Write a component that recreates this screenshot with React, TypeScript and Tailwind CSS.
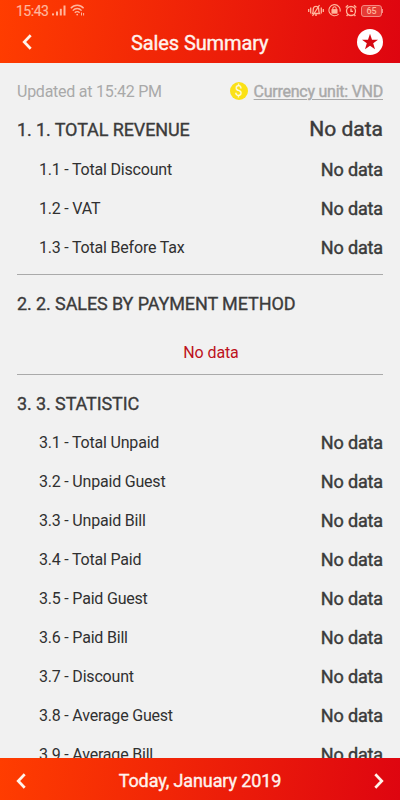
const revenueRows = ["1.1 - Total Discount", "1.2 - VAT", "1.3 - Total Before Tax"];

const statisticRows = [
  "3.1 - Total Unpaid",
  "3.2 - Unpaid Guest",
  "3.3 - Unpaid Bill",
  "3.4 - Total Paid",
  "3.5 - Paid Guest",
  "3.6 - Paid Bill",
  "3.7 - Discount",
  "3.8 - Average Guest",
  "3.9 - Average Bill",
];

function Chevron({ flip = false }: { flip?: boolean }) {
  return (
    <svg width="10" height="16" viewBox="0 0 10 16" fill="none" className={flip ? "rotate-180" : ""}>
      <path d="M8.7 1.2 L2.2 8 L8.7 14.8" stroke="#fff3ea" strokeWidth="2.7" />
    </svg>
  );
}

function StatusBar() {
  return (
    <div className="flex h-[21px] items-center pl-4 pr-[17px] text-[#ffb59c]">
      <span className="text-[14px] leading-5 tracking-[-0.5px] [-webkit-text-stroke:0.2px_#ffb59c]">15:43</span>
      <svg width="14" height="11" viewBox="0 0 14 11" fill="currentColor" className="ml-1">
        <rect x="0" y="8.4" width="2" height="2" />
        <rect x="4" y="6.5" width="2" height="4" />
        <rect x="7.8" y="3.8" width="2" height="6.7" />
        <rect x="11.5" y="0.5" width="2" height="10" />
      </svg>
      <svg width="16" height="13" viewBox="0 0 16 13" fill="none" stroke="currentColor" strokeWidth="1.4" className="ml-1">
        <path d="M0.8 4.3 C4.4 0.2 10 0.2 13.6 4.3" />
        <path d="M2.8 6.6 C5.3 3.8 9.1 3.8 11.6 6.6" />
        <path d="M4.8 8.8 C6.3 7.2 8.1 7.2 9.6 8.8" />
        <circle cx="7.2" cy="10.6" r="0.9" fill="currentColor" stroke="none" />
        <path d="M11.5 8.5 V11.5 M13.6 9 V11.5" strokeWidth="1" />
      </svg>
      <div className="ml-auto flex items-center gap-1">
        <svg width="16" height="13" viewBox="0 0 16 13" fill="none" stroke="currentColor" strokeWidth="1.3">
          <path d="M0.7 5 V8 M2.7 3.5 V9.5 M13.3 3.5 V9.5 M15.3 5 V8" />
          <path d="M4.5 9.5 C5.5 8 5 5.5 5.5 4 C6.2 1.8 9.8 1.8 10.5 4 C11 5.5 10.5 8 11.5 9.5 Z M7 11.2 H9" />
          <path d="M11.5 1 L4.5 12" />
        </svg>
        <svg width="13" height="13" viewBox="0 0 13 13" fill="none" stroke="currentColor" strokeWidth="1.1">
          <path d="M10.7 10 A5.6 5.6 0 1 1 12 7.6" />
          <rect x="4" y="5.7" width="5" height="3.4" fill="currentColor" />
          <path d="M4.8 5.7 V4.5 A1.7 1.7 0 0 1 8.2 4.5 V5.7" />
        </svg>
        <svg width="12" height="13" viewBox="0 0 12 13" fill="none" stroke="currentColor" strokeWidth="1.3">
          <circle cx="6" cy="7" r="4.5" />
          <path d="M6 4.5 V7.3 H8 M0.7 3.5 L3 1.2 M11.3 3.5 L9 1.2 M2.8 10.5 L1.6 12 M9.2 10.5 L10.4 12" />
        </svg>
        <div className="flex items-center">
          <span className="flex h-3 w-[21px] items-center justify-center rounded-[3px] border border-[#f58a83] bg-[#e63a35] pt-px text-[9px] font-medium leading-none">
            65
          </span>
          <span className="h-1 w-px bg-[#f58a83]" />
        </div>
      </div>
    </div>
  );
}

function Row({ label }: { label: string }) {
  return (
    <div className="flex h-[39px] shrink-0 items-center justify-between pl-[22px]">
      <span className="text-base tracking-[-0.2px] text-[#303030]">{label}</span>
      <span className="text-lg tracking-[-0.15px] text-[#3b3b3b] [-webkit-text-stroke:0.45px_#3b3b3b]">No data</span>
    </div>
  );
}

function Heading({ children }: { children: string }) {
  return (
    <h2 className="text-lg leading-7 tracking-[-0.1px] text-[#3b3b3b] [-webkit-text-stroke:0.35px_#3b3b3b]">
      {children}
    </h2>
  );
}

export default function App() {
  return (
    <div className="flex h-[800px] w-[400px] flex-col overflow-hidden bg-[#f1f1f1] font-['Roboto',sans-serif]">
      <header className="h-[63px] shrink-0 bg-linear-[98deg] from-[#ff3d00] to-[#de0510]">
        <StatusBar />
        <div className="flex h-[42px] items-center pl-[22px] pr-[17px]">
          <Chevron />
          <h1 className="ml-[99px] pt-[2px] text-xl tracking-[-0.1px] text-[#fff3ee] [-webkit-text-stroke:0.4px_#fff3ee]">
            Sales Summary
          </h1>
          <svg width="26" height="26" viewBox="0 0 26 26" className="ml-auto">
            <circle cx="13" cy="13" r="13" fill="#fff" />
            <path
              d="M13 4.8 L15 10.7 H21 L16.2 14.3 L18 20.3 L13 16.7 L8 20.3 L9.8 14.3 L5 10.7 H11 Z"
              fill="#d60812"
            />
          </svg>
        </div>
      </header>

      <main className="flex min-h-0 flex-1 flex-col overflow-hidden px-[17px] pt-[17px]">
        <div className="flex h-6 shrink-0 items-center text-base tracking-[-0.25px] text-[#a9a9a9]">
          <span>Updated at 15:42 PM</span>
          <span className="mr-[6px] mb-[3px] ml-auto flex size-[18px] items-center justify-center rounded-full bg-[#fbe116] text-sm leading-none text-[#fffbe0]">
            $
          </span>
          <span className="underline decoration-1 underline-offset-2 [-webkit-text-stroke:0.4px_#a9a9a9]">
            Currency unit: VND
          </span>
        </div>

        <div className="flex h-[46px] shrink-0 items-center justify-between pt-[5px]">
          <Heading>1. 1. TOTAL REVENUE</Heading>
          <span className="text-[21px] text-[#3b3b3b] [-webkit-text-stroke:0.45px_#3b3b3b]">No data</span>
        </div>
        {revenueRows.map((label) => (
          <Row key={label} label={label} />
        ))}

        <section className="mt-[7px] flex h-[101px] shrink-0 flex-col border-y border-[#aaaaaa] pt-[15px]">
          <Heading>2. 2. SALES BY PAYMENT METHOD</Heading>
          <p className="mt-[23px] pl-[22px] text-center text-base leading-6 tracking-[-0.1px] text-[#bd1220]">No data</p>
        </section>

        <div className="shrink-0 pt-[15px] pb-[5px]">
          <Heading>3. 3. STATISTIC</Heading>
        </div>
        {statisticRows.map((label) => (
          <Row key={label} label={label} />
        ))}
      </main>

      <footer className="flex h-[42px] shrink-0 items-center justify-between bg-linear-[98deg] from-[#ff3d00] to-[#de0510] px-4 pt-1">
        <Chevron />
        <span className="text-lg tracking-[-0.1px] text-[#fff3ee] [-webkit-text-stroke:0.4px_#fff3ee]">
          Today, January 2019
        </span>
        <Chevron flip />
      </footer>
    </div>
  );
}
